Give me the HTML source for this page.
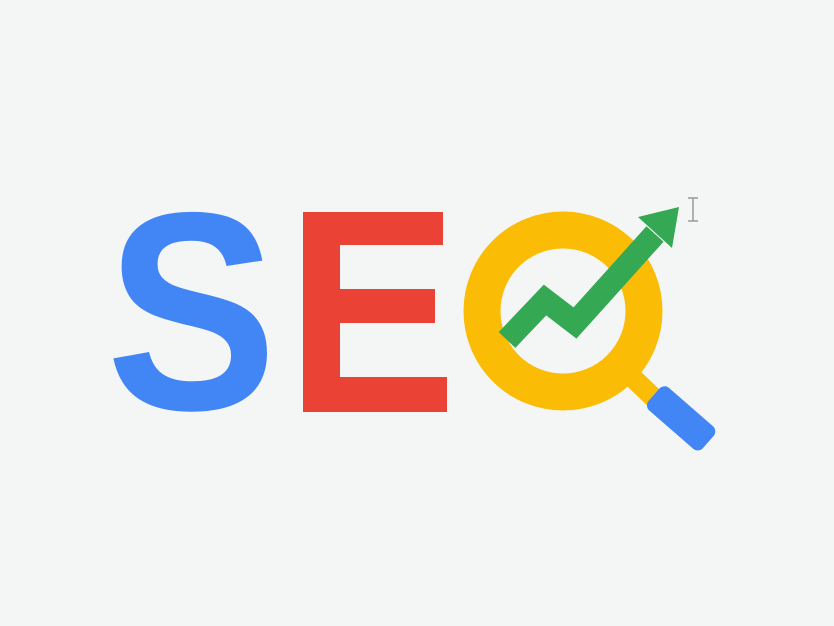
<!DOCTYPE html>
<html><head><style>html,body{margin:0;padding:0;background:#f4f6f6;width:834px;height:626px;overflow:hidden}</style></head>
<body>
<svg width="834" height="626" viewBox="0 0 834 626" xmlns="http://www.w3.org/2000/svg">
<rect width="834" height="626" fill="#f4f6f6"/>
<text x="0" y="0" transform="translate(106,409) scale(0.89,0.98)" font-family="Liberation Sans, Arial, sans-serif" font-weight="bold" font-size="288" fill="#4285F4">S</text>
<g fill="#EA4335">
<rect x="303" y="212" width="37" height="200"/>
<rect x="303" y="212" width="140" height="33"/>
<rect x="303" y="289" width="132" height="34"/>
<rect x="303" y="377" width="144" height="35"/>
</g>
<line x1="632" y1="377" x2="658" y2="402" stroke="#FBBC05" stroke-width="20"/>
<rect x="-8" y="-15" width="72" height="30" rx="7" fill="#4285F4" transform="translate(660,400) rotate(41)"/>
<circle cx="563" cy="311" r="81" fill="none" stroke="#FBBC05" stroke-width="37"/>
<polyline points="507,340 545,300 575,323 655,234" fill="none" stroke="#34A853" stroke-width="23" stroke-linejoin="miter"/>
<polygon points="638,217 679,207 672,248" fill="#34A853"/>
<path d="M688 198h10M693 198v23M688 221h10" stroke="#999" stroke-width="1.5" fill="none"/>
</svg>
</body></html>
